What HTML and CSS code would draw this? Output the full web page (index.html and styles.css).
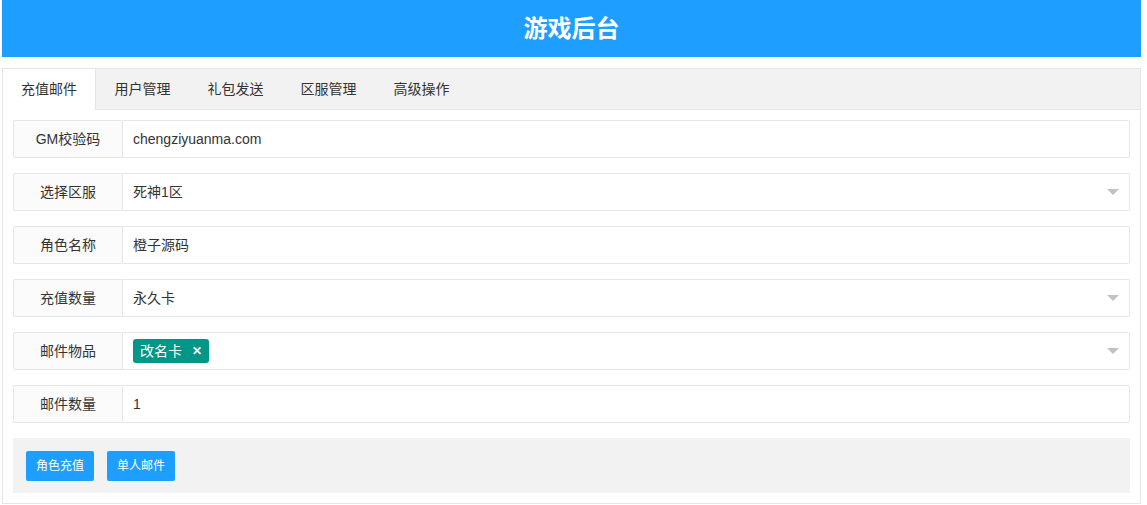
FILE: index.html
```html
<!DOCTYPE html>
<html lang="zh-CN">
<head>
<meta charset="utf-8">
<title>游戏后台</title>
<link rel="stylesheet" href="styles.css">
</head>
<body>
<div class="wrap">
  <div class="header">游戏后台</div>
  <div class="card">
    <ul class="tabs">
      <li class="tab active">充值邮件</li>
      <li class="tab">用户管理</li>
      <li class="tab">礼包发送</li>
      <li class="tab">区服管理</li>
      <li class="tab">高级操作</li>
    </ul>
    <div class="content">
      <div class="row">
        <div class="label">GM校验码</div>
        <div class="field">chengziyuanma.com</div>
      </div>
      <div class="row">
        <div class="label">选择区服</div>
        <div class="field select">死神1区<span class="arrow"></span></div>
      </div>
      <div class="row">
        <div class="label">角色名称</div>
        <div class="field">橙子源码</div>
      </div>
      <div class="row">
        <div class="label">充值数量</div>
        <div class="field select">永久卡<span class="arrow"></span></div>
      </div>
      <div class="row">
        <div class="label">邮件物品</div>
        <div class="field select"><span class="tag">改名卡<span class="tag-x">✕</span></span><span class="arrow"></span></div>
      </div>
      <div class="row">
        <div class="label">邮件数量</div>
        <div class="field">1</div>
      </div>
      <div class="actions">
        <button class="btn">角色充值</button>
        <button class="btn">单人邮件</button>
      </div>
    </div>
  </div>
</div>
</body>
</html>
```
FILE: styles.css
```css
* { box-sizing: border-box; }
html, body { margin: 0; padding: 0; background: #fff; }
body {
  font-family: "Liberation Sans", "Noto Sans CJK SC", sans-serif;
  color: #333;
  font-size: 14px;
}
.wrap {
  width: 1139px;
  margin-left: 2px;
}
.header {
  height: 57px;
  line-height: 57px;
  background: #1E9FFF;
  color: #fff;
  text-align: center;
  font-size: 24px;
  font-weight: bold;
}
.card {
  margin-top: 11px;
  border: 1px solid #e6e6e6;
}
.tabs {
  list-style: none;
  margin: 0;
  padding: 0;
  display: flex;
  height: 41px;
  background: #f2f2f2;
  border-bottom: 1px solid #e6e6e6;
}
.tab {
  width: 93px;
  height: 40px;
  line-height: 40px;
  text-align: center;
  font-size: 14px;
  color: #333;
}
.tab.active {
  background: #fff;
  height: 41px;
  border-right: 1px solid #e6e6e6;
}
.content {
  padding: 10px;
}
.row {
  display: flex;
  height: 38px;
  margin-bottom: 15px;
}
.label {
  width: 110px;
  flex: none;
  border: 1px solid #e6e6e6;
  border-radius: 2px 0 0 2px;
  background: #FBFBFB;
  text-align: center;
  line-height: 36px;
  color: #333;
}
.field {
  flex: 1;
  position: relative;
  border: 1px solid #e6e6e6;
  border-left: none;
  border-radius: 0 2px 2px 0;
  padding-left: 10px;
  line-height: 36px;
  color: #333;
  display: flex;
  align-items: center;
}
.arrow {
  position: absolute;
  right: 10px;
  top: 50%;
  margin-top: -3px;
  width: 0;
  height: 0;
  border-left: 6px solid transparent;
  border-right: 6px solid transparent;
  border-top: 6px solid #c2c2c2;
}
.tag {
  display: inline-flex;
  align-items: center;
  height: 24px;
  line-height: 24px;
  background: #009688;
  color: #fff;
  border-radius: 3px;
  padding: 0 7px 0 7px;
  font-size: 14px;
}
.tag-x {
  margin-left: 10px;
  font-size: 12px;
  font-weight: bold;
}
.actions {
  display: flex;
  align-items: center;
  gap: 13px;
  height: 55px;
  padding: 0 13px;
  background: #f2f2f2;
}
.btn {
  height: 30px;
  line-height: 30px;
  padding: 0 10px;
  border: none;
  border-radius: 2px;
  background: #1E9FFF;
  color: #fff;
  font-size: 12px;
  font-family: "Liberation Sans", "Noto Sans CJK SC", sans-serif;
  cursor: pointer;
}
```
